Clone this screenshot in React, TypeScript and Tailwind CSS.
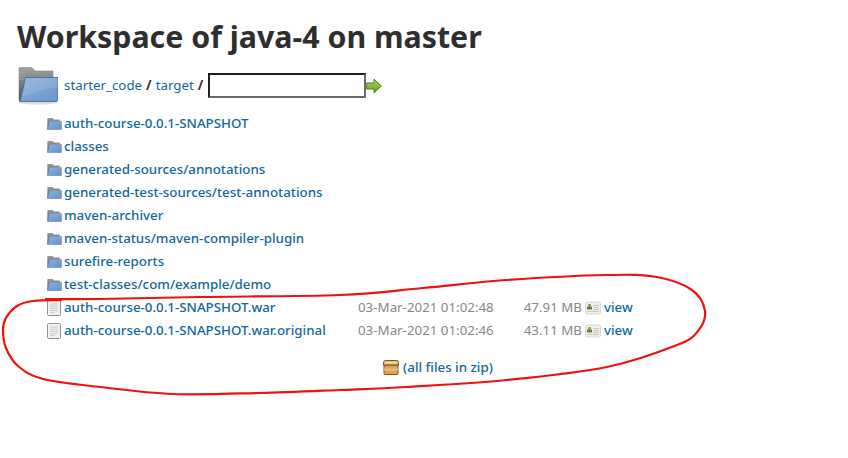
const NOTO = "font-['Noto_Sans','Open_Sans',sans-serif]";

const Folder = ({ className = "" }: { className?: string }) => (
  <svg viewBox="0 0 15 13.6" className={className}>
    <defs>
      <linearGradient id="fb" x1="0" y1="0" x2="0" y2="1">
        <stop offset="0" stopColor="#9a9a9a" />
        <stop offset="1" stopColor="#5e5e5e" />
      </linearGradient>
      <linearGradient id="ff" x1="0" y1="0" x2="1" y2="1">
        <stop offset="0" stopColor="#8fb3dc" />
        <stop offset="1" stopColor="#5f8fc8" />
      </linearGradient>
    </defs>
    <path d="M0 13V1.5Q0 1 .5 1H5.5L7 2.5H13V5H3L1 13Z" fill="url(#fb)" />
    <path d="M2.4 4.6H14.8V12.5Q14.8 13.4 13.9 13.4H.4Z" fill="url(#ff)" stroke="#5b85ba" strokeWidth="0.5" />
  </svg>
);

const BigFolder = () => (
  <svg viewBox="0 0 40 38" className="w-10 h-[38px] shrink-0">
    <defs>
      <linearGradient id="bb" x1="0" y1="0" x2="0" y2="1">
        <stop offset="0" stopColor="#a2a2a2" />
        <stop offset="1" stopColor="#4c4c4c" />
      </linearGradient>
      <linearGradient id="bf" x1="0" y1="0" x2="1" y2="1">
        <stop offset="0" stopColor="#8cb0da" />
        <stop offset="1" stopColor="#6a96cb" />
      </linearGradient>
    </defs>
    <ellipse cx="20" cy="35.5" rx="19" ry="2" fill="#dcdcdc" />
    <path d="M1 34V1.5Q1 0.5 2 0.5H14L17 4H35V11H8L3 34Z" fill="url(#bb)" stroke="#777" strokeWidth="0.5" />
    <path d="M1 6H8M1 9H7M1 12H6" stroke="#bdbdbd" strokeWidth="0.5" />
    <path d="M7.5 10.5H40V32.5Q40 34.5 38 34.5H2Z" fill="url(#bf)" stroke="#3f6ea8" strokeWidth="0.9" />
    <path d="M7.5 11H39.5V20Q22 22 5 30Z" fill="#fff" opacity="0.12" />
  </svg>
);

const FileIcon = () => (
  <svg viewBox="0 0 14 16" className="w-3.5 h-4 shrink-0">
    <rect x="0.5" y="0.5" width="13" height="15" rx="1" fill="#f3f3f3" stroke="#8f8f8f" />
    <path d="M3 4H11M3 6.2H11M3 8.4H11M3 10.6H11M3 12.6H8" stroke="#c8c8c8" strokeWidth="1" />
  </svg>
);

const ViewIcon = () => (
  <svg viewBox="0 0 16 14" className="w-4 h-3.5 shrink-0">
    <rect x="0.5" y="1" width="15" height="12" rx="1.5" fill="#efefef" stroke="#d8d8d8" />
    <rect x="3" y="3" width="3" height="2.5" rx="1" fill="#a08a4a" />
    <rect x="2" y="5.5" width="5" height="3" fill="#6d7a35" />
    <path d="M8.5 4.5H14M8.5 6.5H14M8.5 8.5H14M2 10.5H14" stroke="#c2c2c2" strokeWidth="0.9" />
  </svg>
);

const ZipIcon = () => (
  <svg viewBox="0 0 16 15" className="w-4 h-[15px] shrink-0">
    <path d="M1 5V13.5Q1 14.5 2 14.5H14Q15 14.5 15 13.5V5Z" fill="#d9a557" stroke="#7c5420" />
    <rect x="1" y="8.5" width="14" height="2" fill="#eac07e" />
    <path d="M2.5 0.5H13.5Q15.5 0.5 15.5 2.5V5H0.5V2.5Q0.5 0.5 2.5 0.5Z" fill="#e6bd7a" stroke="#7c5420" />
    <rect x="3" y="2" width="10" height="1.2" fill="#f6e2b8" />
  </svg>
);

const GoArrow = () => (
  <svg viewBox="0 0 16 16" className="w-4 h-4 shrink-0">
    <defs>
      <linearGradient id="ga" x1="0" y1="0" x2="0" y2="1">
        <stop offset="0" stopColor="#b0dc66" />
        <stop offset="1" stopColor="#5f9e24" />
      </linearGradient>
    </defs>
    <path d="M0.7 5H8V1.2L15.3 8L8 14.8V11H0.7Z" fill="url(#ga)" stroke="#4c7f1f" strokeWidth="1" />
  </svg>
);

const dirs = [
  "auth-course-0.0.1-SNAPSHOT",
  "classes",
  "generated-sources/annotations",
  "generated-test-sources/test-annotations",
  "maven-archiver",
  "maven-status/maven-compiler-plugin",
  "surefire-reports",
  "test-classes/com/example/demo",
];

const files = [
  ["auth-course-0.0.1-SNAPSHOT.war", "03-Mar-2021 01:02:48", "47.91 MB"],
  ["auth-course-0.0.1-SNAPSHOT.war.original", "03-Mar-2021 01:02:46", "43.11 MB"],
];

const pts: [number, number][] = [
  [62, 300], [33, 301], [17, 306], [6, 318], [3, 330], [6, 348], [18, 366], [43, 379], [100, 387], [173, 394],
  [260, 393], [340, 390], [407, 387], [507, 380], [607, 367], [677, 345], [698, 331], [705, 311], [692, 290],
  [657, 277], [607, 275], [507, 280], [423, 288], [340, 295], [200, 297], [100, 299], [45, 299],
];

function curve(p: [number, number][]) {
  let d = `M${p[0][0]} ${p[0][1]}`;
  for (let i = 0; i < p.length - 1; i++) {
    const a = p[Math.max(i - 1, 0)], b = p[i], c = p[i + 1], e = p[Math.min(i + 2, p.length - 1)];
    d += `C${b[0] + (c[0] - a[0]) / 6} ${b[1] + (c[1] - a[1]) / 6} ${c[0] - (e[0] - b[0]) / 6} ${c[1] - (e[1] - b[1]) / 6} ${c[0]} ${c[1]}`;
  }
  return d;
}

export default function App() {
  return (
    <div className={`${NOTO} relative w-[848px] h-[458px] bg-white overflow-hidden text-[13.33px] text-[#333]`}>
      <div className="pl-[17px] pt-[15px]">
        <h1 className="text-[30.33px] leading-[44px] font-bold text-[#2e2e2e]">Workspace of java-4 on master</h1>
        <div className="flex items-center mt-[7px] h-[39px]">
          <div className="w-[47px] shrink-0 pl-[1px]"><BigFolder /></div>
          <a className="text-[#13669e]">starter_code</a>
          <span className="mx-[4px] font-bold">/</span>
          <a className="text-[#13669e]">target</a>
          <span className="ml-[4px] mr-[5px] font-bold">/</span>
          <input className="w-[158px] h-[25px] border-2 border-t-[#1f1f1f] border-l-[#1f1f1f] border-r-[#6b6b6b] border-b-[#6b6b6b] bg-white" />
          <GoArrow />
        </div>
      </div>
      <div className="pl-[47px] pt-[7px]">
        {dirs.map((d) => (
          <div key={d} className="flex items-center h-[23px]">
            <div className="w-[17px] shrink-0"><Folder className="w-[15px] h-[13px]" /></div>
            <a className="text-[#13669e] font-medium whitespace-nowrap">{d}</a>
          </div>
        ))}
        {files.map(([n, t, s]) => (
          <div key={n} className="flex items-center h-[23px]">
            <div className="w-[17px] shrink-0"><FileIcon /></div>
            <a className="w-[294px] shrink-0 text-[#13669e] font-medium whitespace-nowrap">{n}</a>
            <span className="w-[152px] shrink-0 text-[#878787] whitespace-nowrap">{t}</span>
            <span className="w-[72px] shrink-0 text-right text-[#878787] whitespace-nowrap">{s}</span>
            <span className="ml-[3px] mr-[3px]"><ViewIcon /></span>
            <a className="text-[#13669e] font-medium">view</a>
          </div>
        ))}
        <div className="flex items-center justify-center gap-[4px] w-[782px] mt-[14px] h-[23px]">
          <ZipIcon />
          <a className="text-[#13669e] font-medium">(all files in zip)</a>
        </div>
      </div>
      <svg className="absolute inset-0 pointer-events-none" width="848" height="458" fill="none">
        <path d={curve(pts)} stroke="#f01010" strokeWidth="2.2" />
      </svg>
    </div>
  );
}
